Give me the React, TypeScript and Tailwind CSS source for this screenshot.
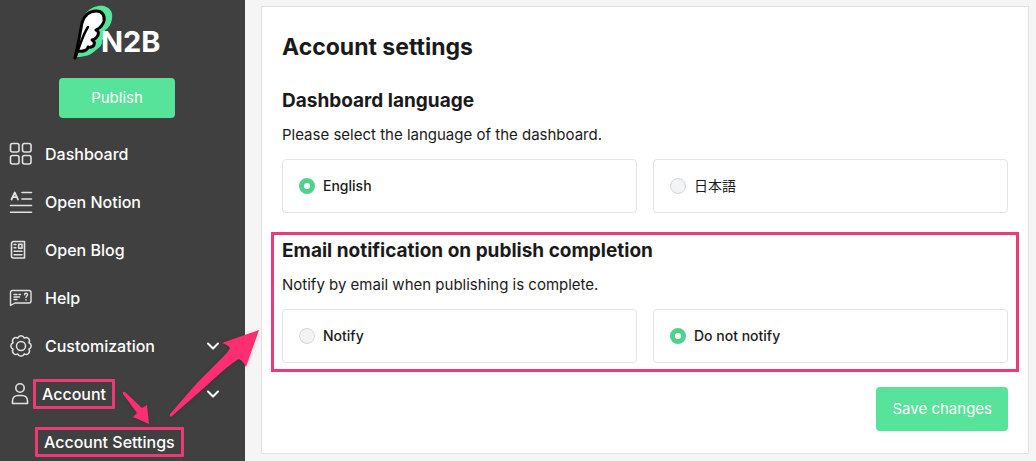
import { useState } from "react";
import type { ReactNode } from "react";

interface NavItem {
  label: string;
  icon: ReactNode;
  expandable?: boolean;
  highlighted?: boolean;
}

interface Option {
  value: string;
  label: string;
  lang?: string;
}

const stroke = {
  fill: "none",
  stroke: "currentColor",
  strokeLinecap: "round" as const,
  strokeLinejoin: "round" as const,
};

function Logo() {
  return (
    <svg viewBox="0 0 92 56" className="h-14 w-[92px]" role="img" aria-label="N2B">
      <path
        d="M15 9C20 3 27 1 33 2C40 4 42 9 41 15C40 20 38 24 34 26C36 30 35 34 31 36C32 41 28 44 25 46C20 51 14 53 6 53L12 30Z"
        fill="#54e59b"
      />
      <path
        d="M4 54L8 35L11 19C13 12 18 7 25 7C31 7 34 11 33 17C32 21 29 24 25 26C29 27 28 34 21 36C25 38 24 44 17 43C17 46 12 48 7 47"
        fill="#fff"
        stroke="#000"
        strokeWidth="3"
        strokeLinecap="round"
        strokeLinejoin="round"
      />
      <path d="M4 54C8 45 11 32 17 23" fill="none" stroke="#000" strokeWidth="2.5" strokeLinecap="round" />
      <text x="30" y="48" fill="#fff" fontSize="29" fontWeight="700" fontFamily="Inter, sans-serif">
        N2B
      </text>
    </svg>
  );
}

const navItems: NavItem[] = [
  {
    label: "Dashboard",
    icon: (
      <svg viewBox="0 0 24 24" className="size-6" {...stroke} strokeWidth="1.6">
        <rect x="1.5" y="1.5" width="8.5" height="8.5" rx="2" />
        <rect x="13.5" y="1.5" width="8.5" height="8.5" rx="2" />
        <rect x="1.5" y="13.5" width="8.5" height="8.5" rx="2" />
        <rect x="13.5" y="13.5" width="8.5" height="8.5" rx="2" />
      </svg>
    ),
  },
  {
    label: "Open Notion",
    icon: (
      <svg viewBox="0 0 24 24" className="size-6" {...stroke} strokeWidth="1.6">
        <path d="M2.5 9.5L5.8 2.5L9 9.5M3.6 7.2H8" strokeWidth="1.8" />
        <path d="M13 2.5H22.5M13 9H22.5M1.5 15.5H22.5M1.5 22.3H22.5" />
      </svg>
    ),
  },
  {
    label: "Open Blog",
    icon: (
      <svg viewBox="0 0 24 24" className="size-6" {...stroke} strokeWidth="1.6">
        <path d="M4.5 3.5H15.5V20H4.5A2 2 0 0 1 2.5 18V5.5A2 2 0 0 1 4.5 3.5Z" />
        <rect x="9.7" y="6.2" width="3.3" height="4" />
        <path d="M5 6.5H7M5 9.7H7M5 13.2H13M5 16.7H13" strokeWidth="1.4" />
      </svg>
    ),
  },
  {
    label: "Help",
    icon: (
      <svg viewBox="0 0 24 24" className="size-6" {...stroke} strokeWidth="1.4">
        <path d="M3.5 4.5H20A2 2 0 0 1 22 6.500V15A2 2 0 0 1 20 17H6L1.5 19.5V6.5A2 2 0 0 1 3.5 4.5Z" />
        <path d="M5 8.500H8M10 8.5H11.5M5 11H10.5M5 13.5H8" />
        <path d="M15.5 8.7C15.5 6.8 18.5 6.8 18.5 8.7C18.5 10 17 10 17 11.5M17 13.8V14" />
      </svg>
    ),
  },
  {
    label: "Customization",
    expandable: true,
    icon: (
      <svg viewBox="0 0 24 24" className="size-6" {...stroke} strokeWidth="1.5">
        <circle cx="12" cy="12" r="4.5" />
        <path d="M8.8 4.1A3.4 3.4 0 0 1 15.2 4.1A3.4 3.4 0 0 1 19.9 8.8A3.4 3.4 0 0 1 19.9 15.2A3.4 3.4 0 0 1 15.2 19.9A3.4 3.4 0 0 1 8.8 19.9A3.4 3.4 0 0 1 4.1 15.2A3.4 3.4 0 0 1 4.1 8.8A3.4 3.4 0 0 1 8.8 4.1Z" />
      </svg>
    ),
  },
  {
    label: "Account",
    expandable: true,
    highlighted: true,
    icon: (
      <svg viewBox="0 0 24 24" className="size-6" {...stroke} strokeWidth="1.6">
        <circle cx="11" cy="6" r="4.2" />
        <path d="M3.5 21.5V19C3.5 15.5 6 13.5 9 13.5H13C16 13.5 18.5 15.5 18.5 19V21.5Z" />
      </svg>
    ),
  },
];

function Sidebar() {
  return (
    <aside className="w-[245px] shrink-0 bg-[#404040] pt-1 text-white">
      <div className="flex w-[234px] flex-col items-center gap-[18px]">
        <Logo />
        <button className="h-10 rounded bg-[#57e39a] px-8 text-[15px]">Publish</button>
      </div>
      <nav className="mt-[18px] flex flex-col gap-3 text-base font-medium">
        {navItems.map((item) => (
          <a
            key={item.label}
            href="#"
            className="flex h-9 items-center pr-[25px] pl-[9px]"
          >
            <span className="text-[#e2e2e2]">{item.icon}</span>
            {item.highlighted ? (
              <span className="rounded-[1px] border-3 border-[#ec3a74] px-[6px]">{item.label}</span>
            ) : (
              <span className="pl-3">{item.label}</span>
            )}
            {item.expandable && (
              <svg viewBox="0 0 14 14" className="ml-auto size-[14px]" {...stroke} strokeWidth="2">
                <path d="M2 4.5L7 9.5L12 4.5" />
              </svg>
            )}
          </a>
        ))}
        <a href="#" className="flex h-9 items-center pl-[35px]">
          <span className="rounded-[1px] border-3 border-[#ec3a74] px-[6px]">Account Settings</span>
        </a>
      </nav>
    </aside>
  );
}

function OptionGroup({ name, options, initial }: { name: string; options: Option[]; initial: string }) {
  const [selected, setSelected] = useState(initial);

  return (
    <div className="mt-3 grid grid-cols-2 gap-4">
      {options.map((option) => (
        <label
          key={option.value}
          className="flex h-[54px] items-center gap-2 rounded border border-[#e3e4e6] px-4 text-sm font-medium"
        >
          <input
            type="radio"
            name={name}
            value={option.value}
            checked={selected === option.value}
            onChange={() => setSelected(option.value)}
            className="size-4 appearance-none rounded-full border border-[#d3d6da] bg-[#f1f3f5] checked:border-5 checked:border-[#51d28c] checked:bg-white"
          />
          <span lang={option.lang} className={option.lang === "ja" ? "font-normal" : ""}>
            {option.label}
          </span>
        </label>
      ))}
    </div>
  );
}

function Arrows() {
  return (
    <svg
      className="pointer-events-none absolute top-[320px] left-[115px] h-[110px] w-[150px] drop-shadow-sm"
      viewBox="115 320 150 110"
      fill="#ff2d72"
      aria-hidden="true"
    >
      <path d="M259 330L246 367Q243 361 239 359Q232 362 205 387L172 416Q169 418 170 414L197 383L222 358Q229 351 230 348Q228 345 222 343Z" />
      <path d="M149 424L147 405L142 408L125 392Q122 391 123 394L137 413L133 417Z" />
    </svg>
  );
}

export default function App() {
  return (
    <div className="relative flex min-h-screen bg-[#f5f5f5] font-[Inter,'Noto_Sans_CJK_JP',sans-serif] text-[#1a1a1a]">
      <Sidebar />
      <main className="min-w-0 flex-1 pt-[6px] pr-[7px] pb-[7px] pl-4">
        <form
          className="border border-[#e2e2e2] bg-white px-5 pt-6 pb-[22px]"
          onSubmit={(e) => e.preventDefault()}
        >
          <h1 className="text-[23px] leading-8 font-bold">Account settings</h1>

          <section className="mt-6">
            <h2 className="text-[19px] leading-7 font-bold">Dashboard language</h2>
            <p className="mt-2 text-[15px] leading-6">Please select the language of the dashboard.</p>
            <OptionGroup
              name="language"
              initial="en"
              options={[
                { value: "en", label: "English" },
                { value: "ja", label: "日本語", lang: "ja" },
              ]}
            />
          </section>

          <section className="relative mt-6">
            <div className="pointer-events-none absolute -inset-x-[11px] -top-[5px] -bottom-[9px] border-3 border-[#ec3a74]" />
            <h2 className="text-[19px] leading-7 font-bold">Email notification on publish completion</h2>
            <p className="mt-2 text-[15px] leading-6">Notify by email when publishing is complete.</p>
            <OptionGroup
              name="notification"
              initial="off"
              options={[
                { value: "on", label: "Notify" },
                { value: "off", label: "Do not notify" },
              ]}
            />
          </section>

          <div className="mt-6 flex justify-end">
            <button type="submit" className="h-11 rounded bg-[#57e39a] px-4 text-[15px] text-white">
              Save changes
            </button>
          </div>
        </form>
      </main>
      <Arrows />
    </div>
  );
}
